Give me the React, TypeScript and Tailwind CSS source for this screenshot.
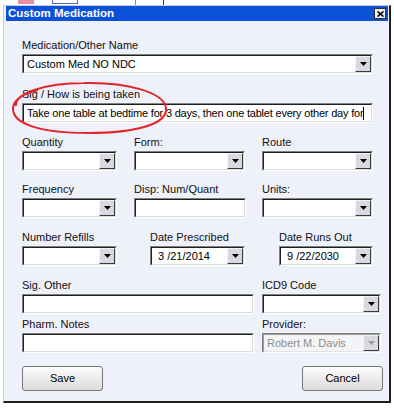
import React from 'react';

function DropBtn({ disabled = false }: { disabled?: boolean }) {
  return (
    <div className="w-[16px] h-full shrink-0 bg-[#d8d9e2] border border-t-[#f6f6f6] border-l-[#f6f6f6] border-b-[#3a3a3a] border-r-[#3a3a3a] flex items-center justify-center">
      <svg width="7" height="4" viewBox="0 0 7 4">
        <path d="M0 0h7L3.5 4z" fill={disabled ? '#9c9c9c' : '#000'} />
      </svg>
    </div>
  );
}

function Box({ className = '', disabled = false, children }: { className?: string; disabled?: boolean; children?: React.ReactNode }) {
  return (
    <div className={`h-[20px] border border-t-[#808080] border-l-[#808080] border-b-white border-r-white ${className}`}>
      <div
        className={`h-full flex items-center border ${
          disabled
            ? 'bg-[#f4f4f6] border-t-[#9a9a9a] border-l-[#9a9a9a] border-b-[#e4e4e4] border-r-[#e4e4e4]'
            : 'bg-white border-t-[#1e1e1e] border-l-[#1e1e1e] border-b-[#dcdcdc] border-r-[#dcdcdc]'
        }`}
      >
        {children}
      </div>
    </div>
  );
}

function Combo({ className = '', value = '', disabled = false, pad = 'pl-[3px]' }: { className?: string; value?: string; disabled?: boolean; pad?: string }) {
  return (
    <Box className={className} disabled={disabled}>
      <span className={`flex-1 ${pad} whitespace-nowrap overflow-hidden ${disabled ? 'text-[#8c8c8c]' : 'text-black'}`}>{value}</span>
      <DropBtn disabled={disabled} />
    </Box>
  );
}

function Label({ children }: { children: React.ReactNode }) {
  return <div className="h-[13px] leading-[13px] text-[11px] text-[#111] whitespace-nowrap">{children}</div>;
}

function Btn({ children }: { children: React.ReactNode }) {
  return (
    <button className="w-[81px] h-[25px] rounded-[3px] border border-[#767676] bg-linear-to-b from-[#fcfcfc] to-[#dcdcdc] text-[11px] text-black">
      {children}
    </button>
  );
}

export default function App() {
  return (
    <div className="w-[394px] h-[408px] bg-white overflow-hidden font-['Liberation_Sans',Arial,sans-serif] text-[11px] leading-[13px]">
      {/* background app peeking above */}
      <div className="h-[5px] flex items-start">
        <div className="ml-[18px] w-[16px] h-[4px] bg-[#e8909e]" />
        <div className="ml-[18px] w-[26px] h-[4px] border border-[#5a6ab8] border-t-0" />
        <div className="ml-[57px] w-px h-[5px] bg-[#888]" />
        <div className="ml-[27px] w-px h-[5px] bg-[#333]" />
      </div>

      <div className="ml-[3px] w-[388px] h-[398px] bg-[#eef0fa] border-l border-t border-b-2 border-r-2 border-l-[#c9ccd9] border-t-[#c9ccd9] border-b-[#1e1e1e] border-r-[#1e1e1e] pl-[2px] pr-px relative">
        {/* title bar */}
        <div className="h-[15px] bg-[#0b51d8] flex items-center justify-between pl-[2px] pr-[2px]">
          <span className="text-white font-bold text-[11.5px] leading-[15px]">Custom Medication</span>
          <div className="w-[12px] h-[11px] bg-[#f0f0f0] border border-[#333] flex items-center justify-center">
            <svg width="7" height="6" viewBox="0 0 7 6">
              <path d="M0.5 0.5L6.5 5.5M6.5 0.5L0.5 5.5" stroke="#000" strokeWidth="1.6" />
            </svg>
          </div>
        </div>

        <div className="pl-[16px] pt-[18px] flex flex-col">
          <div className="flex flex-col gap-[2px]">
            <Label>Medication/Other Name</Label>
            <Combo className="w-[351px]" value="Custom Med NO NDC" />
          </div>

          <div className="mt-[14px] flex flex-col gap-[2px]">
            <Label>Sig / How is being taken</Label>
            <Box className="w-[351px]">
              <span className="pl-[3px] whitespace-nowrap overflow-hidden flex items-center tracking-[-0.2px]">
                Take one table at bedtime for 3 days, then one tablet every other day for
                <span className="inline-block w-px h-[13px] bg-black" />
              </span>
            </Box>
          </div>

          <div className="mt-[13px] flex">
            <div className="w-[95px] flex flex-col gap-[2px]">
              <Label>Quantity</Label>
              <Combo className="w-[95px]" />
            </div>
            <div className="ml-[17px] w-[111px] flex flex-col gap-[2px]">
              <Label>Form:</Label>
              <Combo className="w-[111px]" />
            </div>
            <div className="ml-[17px] w-[111px] flex flex-col gap-[2px]">
              <Label>Route</Label>
              <Combo className="w-[111px]" />
            </div>
          </div>

          <div className="mt-[12px] flex">
            <div className="w-[95px] flex flex-col gap-[2px]">
              <Label>Frequency</Label>
              <Combo className="w-[95px]" />
            </div>
            <div className="ml-[17px] w-[112px] flex flex-col gap-[2px]">
              <Label>Disp: Num/Quant</Label>
              <Box className="w-[112px]" />
            </div>
            <div className="ml-[16px] w-[111px] flex flex-col gap-[2px]">
              <Label>Units:</Label>
              <Combo className="w-[111px]" />
            </div>
          </div>

          <div className="mt-[13px] flex">
            <div className="w-[95px] flex flex-col gap-[2px]">
              <Label>Number Refills</Label>
              <Combo className="w-[95px]" />
            </div>
            <div className="ml-[33px] w-[95px] flex flex-col gap-[2px]">
              <Label>Date Prescribed</Label>
              <Combo className="w-[95px]" value="3 /21/2014" pad="pl-[6px]" />
            </div>
            <div className="ml-[34px] w-[94px] flex flex-col gap-[2px]">
              <Label>Date Runs Out</Label>
              <Combo className="w-[94px]" value="9 /22/2030" pad="pl-[6px]" />
            </div>
          </div>

          <div className="mt-[13px] flex">
            <div className="w-[232px] flex flex-col gap-[2px]">
              <Label>Sig. Other</Label>
              <Box className="w-[232px]" />
            </div>
            <div className="ml-[8px] w-[119px] flex flex-col gap-[2px]">
              <Label>ICD9 Code</Label>
              <Combo className="w-[119px]" />
            </div>
          </div>

          <div className="mt-[4px] flex">
            <div className="w-[232px] flex flex-col gap-[2px]">
              <Label>Pharm. Notes</Label>
              <Box className="w-[232px]" />
            </div>
            <div className="ml-[8px] w-[119px] flex flex-col gap-[2px]">
              <Label>Provider:</Label>
              <Combo className="w-[119px]" value="Robert M. Davis" disabled />
            </div>
          </div>

          <div className="mt-[13px] flex">
            <Btn>Save</Btn>
            <div className="ml-[199px]">
              <Btn>Cancel</Btn>
            </div>
          </div>
        </div>

        {/* red hand-drawn annotation */}
        <svg className="absolute left-0 top-0 pointer-events-none" width="388" height="140" viewBox="0 0 388 140">
          <path
            d="M12 100 C10 88 40 77 80 77 C122 76 160 86 162 102 C164 118 132 127 84 127 C40 127 8 119 9 102 C10 92 22 87 34 84"
            fill="none"
            stroke="#e3262b"
            strokeWidth="2"
          />
        </svg>
      </div>
    </div>
  );
}
